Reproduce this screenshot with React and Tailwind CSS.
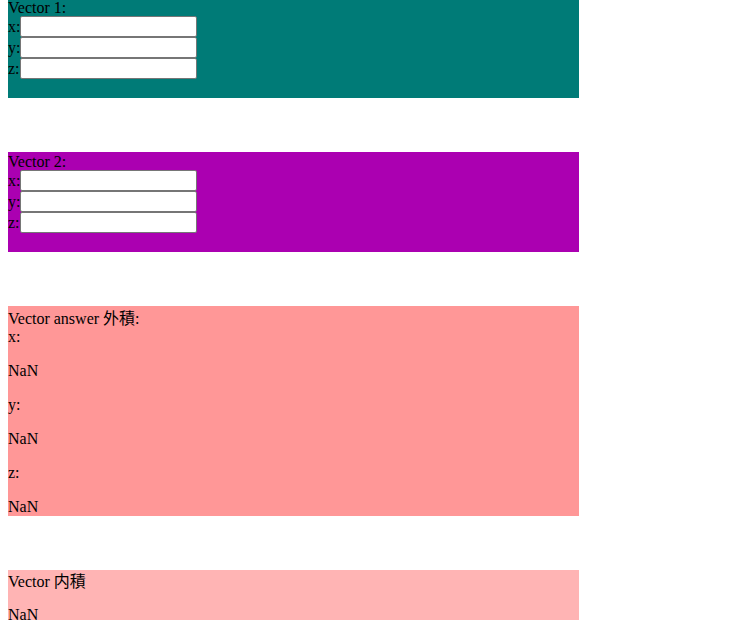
import React from "react";

const font = "font-['Liberation_Serif','Noto_Sans_CJK_TC',serif]";

function InputRow({ label }) {
  return (
    <div className="flex h-[21px] items-start">
      <span className="w-[12px] pt-[2px] leading-[18px]">{label}</span>
      <input
        type="text"
        className="h-[21px] w-[177px] rounded-[2px] border border-[#767676] bg-white px-[2px] text-[13px] outline-none"
      />
    </div>
  );
}

function VectorBox({ title, bg, extra }) {
  return (
    <div className={`flex h-[100px] w-[571px] flex-col ${bg} ${extra || ""}`}>
      <div className="h-[18px] pt-[1px] leading-[18px]">{title}</div>
      <InputRow label="x:" />
      <InputRow label="y:" />
      <InputRow label="z:" />
    </div>
  );
}

export default function App() {
  return (
    <div className={`min-h-[644px] bg-white px-[8px] text-[16px] text-black ${font}`}>
      <div className="flex flex-col gap-[54px]">
        <VectorBox title="Vector 1:" bg="bg-[#007b77]" extra="-mt-[2px]" />
        <VectorBox title="Vector 2:" bg="bg-[#ab00b1]" />
        <div className="flex h-[210px] w-[571px] flex-col bg-[#ff9797]">
          <div className="h-[21px] shrink-0 pt-[4px] leading-[18px]">Vector answer 外積:</div>
          <div className="mt-[1px] flex flex-col gap-[16px] leading-[18px]">
            <div>x:</div>
            <div>NaN</div>
            <div>y:</div>
            <div>NaN</div>
            <div>z:</div>
            <div>NaN</div>
          </div>
        </div>
        <div className="flex h-[50px] w-[571px] flex-col bg-[#ffb4b4]">
          <div className="h-[20px] shrink-0 pt-[3px] leading-[18px]">Vector 内積</div>
          <div className="mt-[16px] shrink-0 leading-[18px]">NaN</div>
        </div>
      </div>
    </div>
  );
}
